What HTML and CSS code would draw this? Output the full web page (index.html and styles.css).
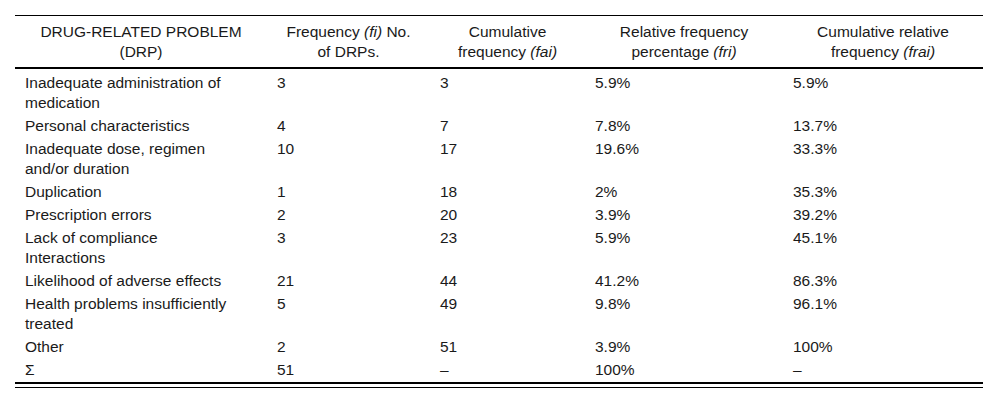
FILE: index.html
```html
<!DOCTYPE html>
<html lang="en">
<head>
<meta charset="utf-8">
<title>Drug-related problems</title>
<link rel="stylesheet" href="styles.css">
</head>
<body>
<div class="table-wrap">
  <table class="drp">
    <colgroup>
      <col class="c1"><col class="c2"><col class="c3"><col class="c4"><col class="c5">
    </colgroup>
    <thead>
      <tr>
        <th>DRUG-RELATED PROBLEM<br>(DRP)</th>
        <th>Frequency <em>(fi)</em> No.<br>of DRPs.</th>
        <th>Cumulative<br>frequency <em>(fai)</em></th>
        <th>Relative frequency<br>percentage <em>(fri)</em></th>
        <th>Cumulative relative<br>frequency <em>(frai)</em></th>
      </tr>
    </thead>
    <tbody>
      <tr class="first"><td>Inadequate administration of<br>medication</td><td>3</td><td>3</td><td>5.9%</td><td>5.9%</td></tr>
      <tr><td>Personal characteristics</td><td>4</td><td>7</td><td>7.8%</td><td>13.7%</td></tr>
      <tr><td>Inadequate dose, regimen<br>and/or duration</td><td>10</td><td>17</td><td>19.6%</td><td>33.3%</td></tr>
      <tr><td>Duplication</td><td>1</td><td>18</td><td>2%</td><td>35.3%</td></tr>
      <tr><td>Prescription errors</td><td>2</td><td>20</td><td>3.9%</td><td>39.2%</td></tr>
      <tr><td>Lack of compliance<br>Interactions</td><td>3</td><td>23</td><td>5.9%</td><td>45.1%</td></tr>
      <tr><td>Likelihood of adverse effects</td><td>21</td><td>44</td><td>41.2%</td><td>86.3%</td></tr>
      <tr><td>Health problems insufficiently<br>treated</td><td>5</td><td>49</td><td>9.8%</td><td>96.1%</td></tr>
      <tr><td>Other</td><td>2</td><td>51</td><td>3.9%</td><td>100%</td></tr>
      <tr class="last"><td>Σ</td><td>51</td><td>–</td><td>100%</td><td>–</td></tr>
    </tbody>
  </table>
</div>
</body>
</html>
```

FILE: styles.css
```css
html, body {
  margin: 0;
  padding: 0;
  background: #ffffff;
}

body {
  font-family: "Liberation Sans", Arial, sans-serif;
  font-size: 15.5px;
  color: #1a1a1a;
}

.table-wrap {
  margin: 15px 17px 0 15px;
  border-bottom: 1px solid #000;
  padding-bottom: 3px;
}

.drp {
  width: 968px;
  border-collapse: separate;
  border-spacing: 0;
  table-layout: fixed;
  border-bottom: 2px solid #000;
}

.c1 { width: 252px; }
.c2 { width: 163px; }
.c3 { width: 155px; }
.c4 { width: 198px; }
.c5 { width: 200px; }

.drp th {
  font-weight: normal;
  text-align: center;
  line-height: 20px;
  padding: 6px 10px 5px;
  border-top: 1px solid #000;
  border-bottom: 2px solid #000;
  vertical-align: top;
}

.drp th em,
.drp td em {
  font-style: italic;
}

.drp td {
  text-align: left;
  vertical-align: top;
  line-height: 20px;
  padding: 1.5px 10px 1.5px 10px;
}

.drp tr.first td {
  padding-top: 4px;
}
```
